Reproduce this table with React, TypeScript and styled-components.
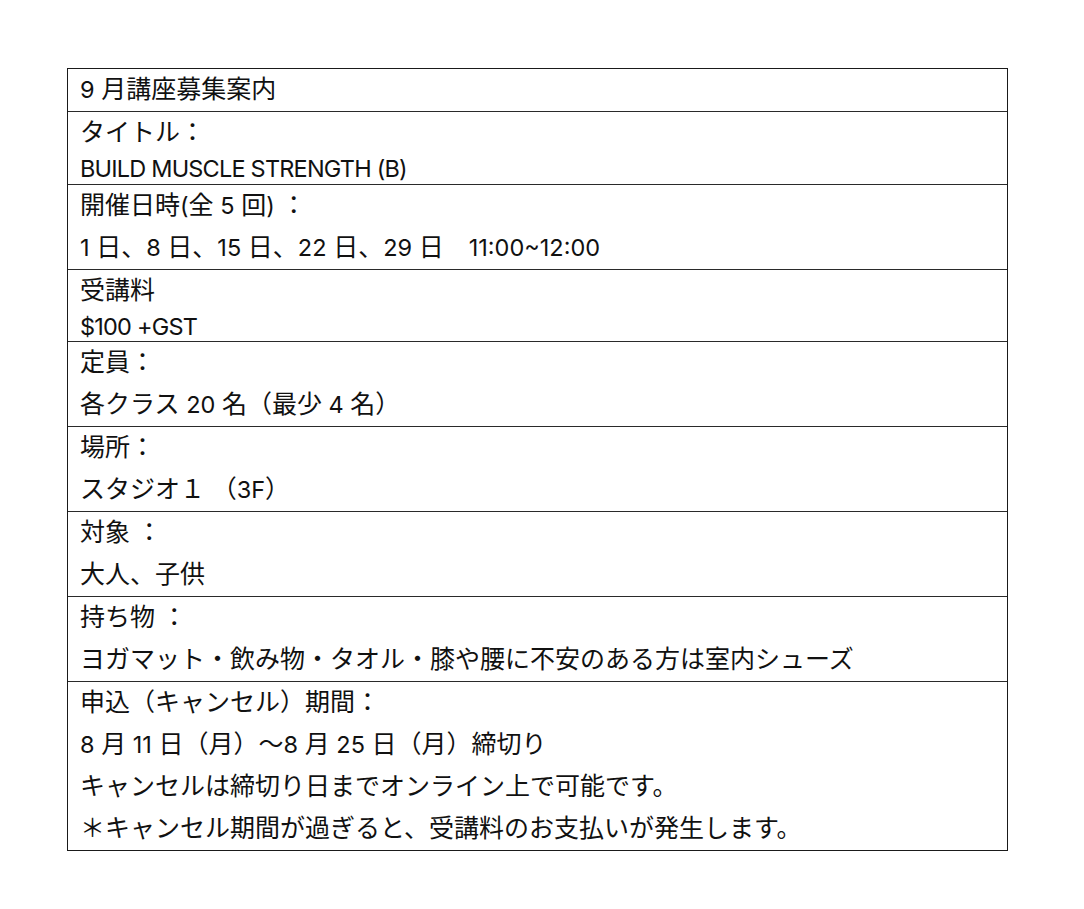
import React from 'react'
import styled, { createGlobalStyle } from 'styled-components'

const GlobalStyle = createGlobalStyle`
    html, body {
        margin: 0;
        padding: 0;
        background: #fff;
    }
    body {
        font-family: Inter, "Noto Sans CJK JP", sans-serif;
        color: #111;
    }
`

const Page = styled.div`
    padding: 68px 0 0 67px;
`

const Table = styled.div`
    width: 939px;
    border: 1px solid #1a1a1a;
    display: flex;
    flex-direction: column;
`

const Row = styled.div`
    border-top: 1px solid #2a2a2a;
    padding: 0 12px;

    &:first-child {
        border-top: none;
    }
`

const Line = styled.div<{ $latin?: boolean }>`
    height: ${(p) => (p.$latin ? '29.5px' : '42px')};
    line-height: ${(p) => (p.$latin ? '30px' : '42px')};
    font-size: 23.5px;
    letter-spacing: ${(p) => (p.$latin ? '-0.8px' : '0')};
    white-space: nowrap;
`

// japanese runs are a touch wider than the latin ones in the source doc
const Cjk = styled.span`
    font-family: "Noto Sans CJK JP", sans-serif;
    font-size: 25px;
    line-height: 1;
    letter-spacing: 0;
`

const CJK_RE = /([\u3000-\u30ff\u3400-\u9fff\uff00-\uffef]+)/

function Mixed({ text }: { text: string }) {
    return (
        <>
            {text.split(CJK_RE).map((part, i) =>
                CJK_RE.test(part) ? <Cjk key={i}>{part}</Cjk> : part
            )}
        </>
    )
}

type Item = { text: string; latin?: boolean }

const rows: Item[][] = [
    [{ text: '9 月講座募集案内' }],
    [{ text: 'タイトル：' }, { text: 'BUILD MUSCLE STRENGTH (B)', latin: true }],
    [
        { text: '開催日時(全 5 回) ：' },
        { text: '1 日、8 日、15 日、22 日、29 日　11:00~12:00' },
    ],
    [{ text: '受講料' }, { text: '$100 +GST', latin: true }],
    [{ text: '定員：' }, { text: '各クラス 20 名（最少 4 名）' }],
    [{ text: '場所：' }, { text: 'スタジオ１ （3F）' }],
    [{ text: '対象 ：' }, { text: '大人、子供' }],
    [
        { text: '持ち物 ：' },
        { text: 'ヨガマット・飲み物・タオル・膝や腰に不安のある方は室内シューズ' },
    ],
    [
        { text: '申込（キャンセル）期間：' },
        { text: '8 月 11 日（月）～8 月 25 日（月）締切り' },
        { text: 'キャンセルは締切り日までオンライン上で可能です。' },
        { text: '＊キャンセル期間が過ぎると、受講料のお支払いが発生します。' },
    ],
]

export default function App() {
    return (
        <Page>
            <GlobalStyle />
            <Table>
                {rows.map((lines, i) => (
                    <Row key={i}>
                        {lines.map((line, j) => (
                            <Line key={j} $latin={line.latin}>
                                <Mixed text={line.text} />
                            </Line>
                        ))}
                    </Row>
                ))}
            </Table>
        </Page>
    )
}
